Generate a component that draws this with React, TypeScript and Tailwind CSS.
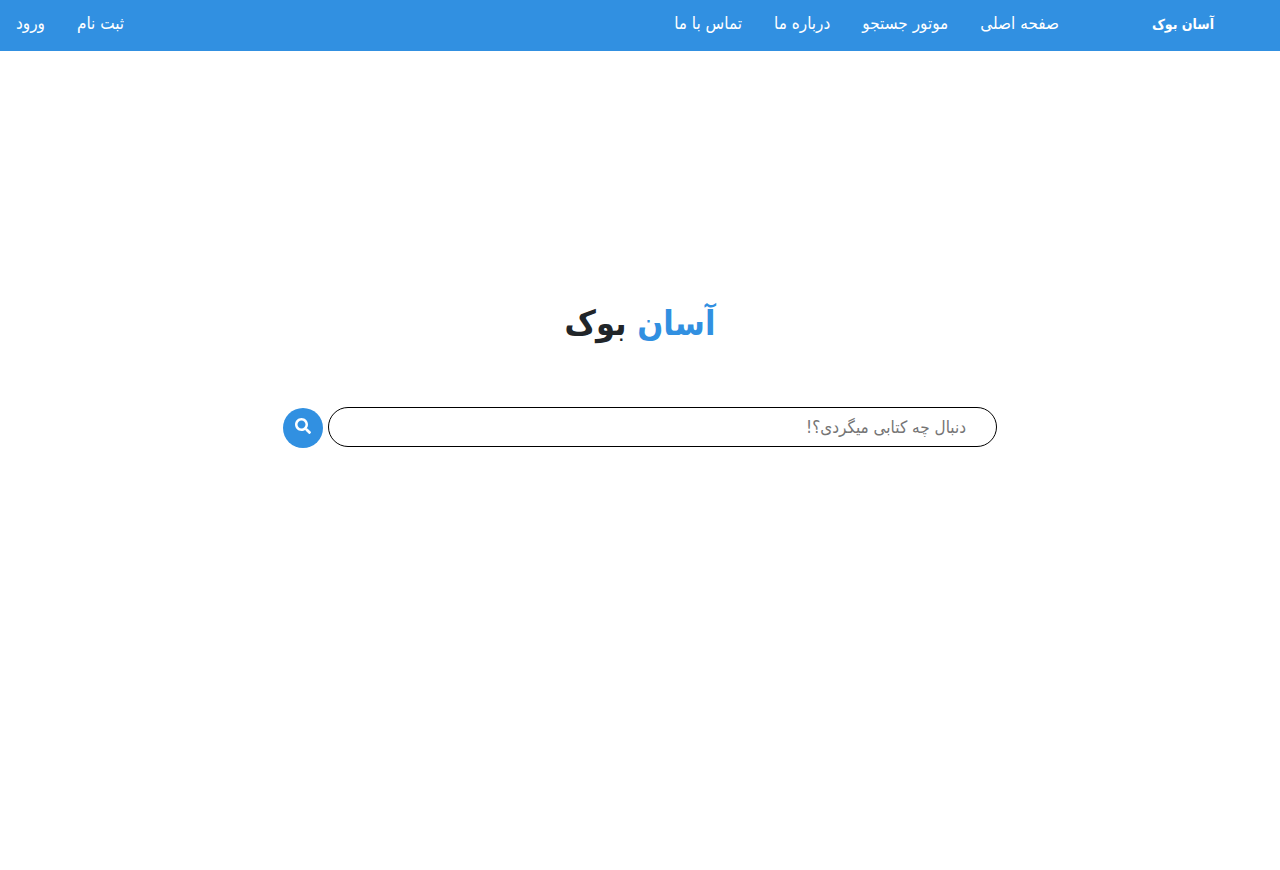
import React from "react";
import { FaSearch } from "react-icons/fa";

const links = ["صفحه اصلی", "موتور جستجو", "درباره ما", "تماس با ما"];
const account = ["ثبت نام", "ورود"];

export default function App() {
  return (
    <div dir="rtl" lang="fa" className="min-h-screen bg-white font-['DejaVu_Sans_Condensed','DejaVu_Sans',sans-serif] text-[#212529]">
      <header className="flex h-[51px] items-center bg-[#3190e1] text-[17px] text-white">
        <a href="#" className="w-[194px] pb-1 text-center text-sm font-bold">
          آسان بوک
        </a>
        <nav className="flex flex-1 items-center justify-between pb-1 ps-[11px]">
          <div className="flex">
            {links.map((l) => (
              <a key={l} href="#" className="px-4">{l}</a>
            ))}
          </div>
          <div className="flex">
            {account.map((l) => (
              <a key={l} href="#" className="px-4">{l}</a>
            ))}
          </div>
        </nav>
      </header>
      <main className="flex flex-col items-center px-4 pt-[240px]">
        <h1 className="text-[34px] leading-[64px] font-bold">
          <span className="text-[#3190e1]">آسان</span> بوک
        </h1>
        <form className="mt-[52px] flex w-full max-w-[714px] gap-[5px]" onSubmit={(e) => e.preventDefault()}>
          <input
            type="text"
            aria-label="جستجوی کتاب"
            placeholder="دنبال چه کتابی میگردی؟!"
            className="h-10 min-w-0 flex-1 rounded-full border border-black px-[30px] text-[17px] outline-none placeholder:text-[#757575]"
          />
          <button type="submit" aria-label="جستجو" className="mt-px flex size-10 items-center justify-center rounded-full bg-[#3190e1] pb-1 text-white">
            <FaSearch className="size-4" />
          </button>
        </form>
      </main>
    </div>
  );
}
